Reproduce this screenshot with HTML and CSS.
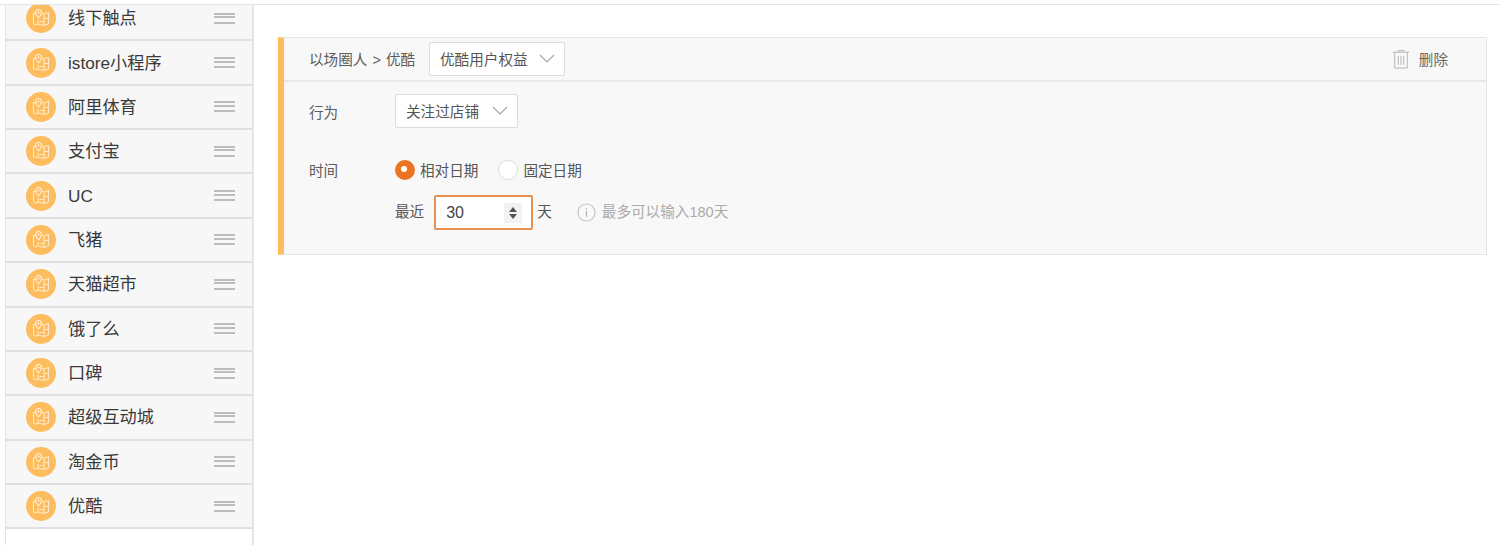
FILE: index.html
```html
<!DOCTYPE html>
<html lang="zh">
<head>
<meta charset="utf-8">
<title>以场圈人</title>
<link rel="stylesheet" href="styles.css">
</head>
<body>
<svg class="defs" width="0" height="0" aria-hidden="true">
  <symbol id="map" viewBox="0 0 20 20">
    <path d="M6 5.5H2.5v12L7 16l6 1.5 4.500-1.500V4.500l-4.500 1.500-2-.5M7 12v4M13 6v11.500M13 10.500h4.500M8.500 13.500H13" fill="none" stroke="#fff" stroke-width="1.100" opacity=".65"/>
    <path d="M7.500 1.500a3 3 0 0 1 3 3c0 2.200-3 5.500-3 5.500s-3-3.300-3-5.500a3 3 0 0 1 3-3z" fill="#fdbd5f" stroke="#fff" stroke-width="1.100" opacity=".8"/>
    <circle cx="7.500" cy="4.500" r="1" fill="#fff" opacity=".8"/>
  </symbol>
  <symbol id="chev" viewBox="0 0 16 9">
    <path d="M1 1l7 7 7-7" fill="none" stroke="#a3a3a3" stroke-width="1.100"/>
  </symbol>
</svg>
<div class="page">
  <aside class="side">
    <ul class="list">
      <li class="row"><svg class="pin"><use href="#map"/></svg><span class="name">线下触点</span><span class="drag"></span></li>
      <li class="row"><svg class="pin"><use href="#map"/></svg><span class="name">istore小程序</span><span class="drag"></span></li>
      <li class="row"><svg class="pin"><use href="#map"/></svg><span class="name">阿里体育</span><span class="drag"></span></li>
      <li class="row"><svg class="pin"><use href="#map"/></svg><span class="name">支付宝</span><span class="drag"></span></li>
      <li class="row"><svg class="pin"><use href="#map"/></svg><span class="name">UC</span><span class="drag"></span></li>
      <li class="row"><svg class="pin"><use href="#map"/></svg><span class="name">飞猪</span><span class="drag"></span></li>
      <li class="row"><svg class="pin"><use href="#map"/></svg><span class="name">天猫超市</span><span class="drag"></span></li>
      <li class="row"><svg class="pin"><use href="#map"/></svg><span class="name">饿了么</span><span class="drag"></span></li>
      <li class="row"><svg class="pin"><use href="#map"/></svg><span class="name">口碑</span><span class="drag"></span></li>
      <li class="row"><svg class="pin"><use href="#map"/></svg><span class="name">超级互动城</span><span class="drag"></span></li>
      <li class="row"><svg class="pin"><use href="#map"/></svg><span class="name">淘金币</span><span class="drag"></span></li>
      <li class="row"><svg class="pin"><use href="#map"/></svg><span class="name">优酷</span><span class="drag"></span></li>
    </ul>
  </aside>
  <main class="main">
    <section class="panel">
      <header class="head">
        <span class="crumb">以场圈人 &gt; 优酷</span>
        <div class="select select-head"><span>优酷用户权益</span><svg class="chev"><use href="#chev"/></svg></div>
        <div class="del">
          <svg class="trash" viewBox="0 0 20 22"><path d="M1 3.500h18M7 3.500V1.500h6v2M3 3.500v17.500h14V3.500M7 7.500v10M10 7.500v10M13 7.500v10" fill="none" stroke="#b5b5b5" stroke-width="1.100"/></svg>
          <span>删除</span>
        </div>
      </header>
      <div class="body">
        <div class="field field-action">
          <span class="label">行为</span>
          <div class="select select-action"><span>关注过店铺</span><svg class="chev"><use href="#chev"/></svg></div>
        </div>
        <div class="field field-time">
          <span class="label">时间</span>
          <div class="time">
            <div class="radios">
              <span class="radio on"></span><span class="radio-text">相对日期</span>
              <span class="radio"></span><span class="radio-text">固定日期</span>
            </div>
            <div class="recent">
              <span>最近</span>
              <div class="num"><span class="num-value">30</span>
                <span class="step"><i class="up"></i><i class="down"></i></span>
              </div>
              <span class="day">天</span>
              <svg class="info" viewBox="0 0 20 20"><circle cx="10" cy="10" r="9" fill="none" stroke="#c4c4c4" stroke-width="1.200"/><path d="M10 8.500v6M10 5.500v1.500" stroke="#b0b0b0" stroke-width="1.200"/></svg>
              <span class="hint">最多可以输入180天</span>
            </div>
          </div>
        </div>
      </div>
    </section>
  </main>
</div>
</body>
</html>
```

FILE: styles.css
```css
* { box-sizing: border-box; }
html, body { margin: 0; height: 100%; overflow: hidden; background: #fff; }
body { font-family: "Liberation Sans", "Noto Sans CJK SC", sans-serif; color: #555; }
.defs { display: block; height: 0; }
.page { display: flex; height: 545px; padding-top: 4px; background: linear-gradient(#e4e4e4, #e4e4e4) no-repeat 0 4px / 100% 1px; }

.side { width: 249px; margin-left: 5px; margin-top: 1px; flex: none; overflow: hidden; border-left: 1px solid #e3e3e3; border-right: 2px solid #e6e6e6; }
.list { list-style: none; margin: -8px 0 0; padding: 0; }
.row { height: 44.360px; display: flex; align-items: center; padding-left: 20px; padding-right: 17px; background: #f7f7f7; border-bottom: 2px solid #e0e0e0; }
.pin { width: 30px; height: 30px; padding: 5px; flex: none; border-radius: 50%; background: #fdbd5f; }
.name { margin-left: 12px; flex: 1; font-size: 17.200px; color: #3a3a3a; line-height: 24px; }
.drag { width: 21px; height: 11px; flex: none; border-top: 2px solid #bcbcbc; border-bottom: 2px solid #bcbcbc; }
.drag::after { content: ""; display: block; height: 2px; margin-top: 1.500px; background: #bcbcbc; }

.main { flex: 1; min-width: 0; padding: 33px 13px 0 24px; }
.panel { border: 1px solid #e4e4e4; border-left: 6px solid #fdbd5f; background: #f8f8f8; height: 218px; }
.head { display: flex; align-items: center; height: 44px; padding: 0 38px 0 25px; border-bottom: 2px solid #e8e8e8; font-size: 14.600px; }
.crumb { width: 120px; flex: none; color: #5c5c5c; word-spacing: 1px; padding-bottom: 2px; }
.select { display: flex; align-items: center; justify-content: space-between; background: #fff; border: 1px solid #dcdcdc; border-radius: 2px; font-size: 14.600px; color: #555; padding-bottom: 2px; }
.select-head { width: 136px; height: 34px; padding-left: 10px; padding-right: 9px; }
.select-action { width: 123px; height: 34px; padding-left: 10px; padding-right: 9px; }
.chev { width: 16px; height: 9px; flex: none; }
.del { margin-left: auto; display: flex; align-items: center; gap: 9px; color: #666; padding-bottom: 1px; }
.trash { width: 18px; height: 20px; }

.body { padding: 12px 0 0 25px; font-size: 14.600px; }
.field { display: flex; }
.field-action { align-items: center; height: 34px; }
.field-time { margin-top: 32px; }
.label { width: 86px; flex: none; color: #5c5c5c; }
.field-time .label { padding-top: 1px; line-height: 20px; }
.time { display: flex; flex-direction: column; }
.radios { display: flex; align-items: center; height: 20px; }
.radio { width: 20px; height: 20px; border-radius: 50%; background: #fff; border: 1px solid #dcdcdc; }
.radio.on { background: #ec7320; border: 6.500px solid #ec7320; }
.radio.on::after { content: ""; display: block; width: 6px; height: 6px; margin: -0.500px; border-radius: 50%; background: #fff; }
.radio-text { margin: 0 20px 0 5px; color: #555; padding-bottom: 1px; }
.recent { display: flex; align-items: center; margin-top: 15px; color: #555; }
.recent > span { padding-bottom: 4px; }
.num { width: 99px; height: 35px; margin-left: 10px; padding-left: 10px; display: flex; align-items: center; justify-content: space-between; background: #fff; border: 2px solid #e9904f; border-radius: 2px; font-size: 16px; color: #444; }
.num-value { padding-top: 1px; }
.step { width: 18px; height: 20px; margin-right: 9px; display: flex; flex-direction: column; align-items: center; justify-content: center; gap: 2px; background: #f2f2f2; }
.step i { width: 0; height: 0; border-left: 4px solid transparent; border-right: 4px solid transparent; }
.up { border-bottom: 5px solid #555; }
.down { border-top: 5px solid #555; }
.day { margin-left: 4px; }
.info { width: 19px; height: 19px; margin-left: 25px; flex: none; }
.hint { margin-left: 6px; color: #aaa; }
```
